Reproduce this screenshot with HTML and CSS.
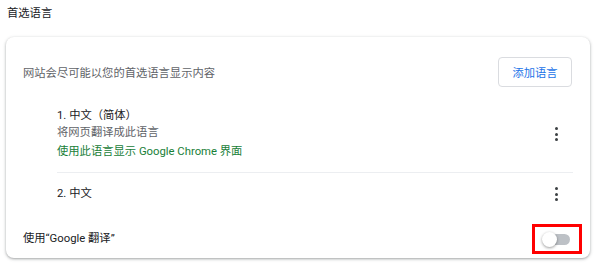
FILE: index.html
```html
<!DOCTYPE html>
<html lang="zh-CN">
<head>
<meta charset="utf-8">
<link rel="stylesheet" href="styles.css">
</head>
<body>
<div class="title">首选语言</div>
<div class="card">
  <div class="header">
    <div class="desc">网站会尽可能以您的首选语言显示内容</div>
    <button class="add-btn">添加语言</button>
  </div>
  <div class="items">
    <div class="item first">
      <div class="item-text">
        <div class="name">1. 中文（简体）</div>
        <div class="sub">将网页翻译成此语言</div>
        <div class="ui-lang">使用此语言显示 Google Chrome 界面</div>
      </div>
      <div class="kebab"><span></span><span></span><span></span></div>
    </div>
    <div class="item second">
      <div class="item-text">
        <div class="name">2. 中文</div>
      </div>
      <div class="kebab"><span></span><span></span><span></span></div>
    </div>
  </div>
  <div class="translate-row">
    <div class="label">使用“Google 翻译”</div>
    <div class="highlight">
      <div class="toggle"><div class="knob"></div></div>
    </div>
  </div>
</div>
</body>
</html>
```
FILE: styles.css
```css
* { box-sizing: border-box; }
html, body { margin: 0; padding: 0; background: #fff; }
body {
  font-family: Roboto, "Noto Sans CJK SC", sans-serif;
  font-size: 11.3px;
  color: #202124;
  width: 608px;
  height: 275px;
  overflow: hidden;
}
.title {
  padding: 6px 0 0 7px;
  line-height: 16px;
  height: 37px;
}
.card {
  margin-left: 6px;
  width: 584px;
  height: 221px;
  border-radius: 8px;
  background: #fff;
  box-shadow: 0 1px 2px rgba(60,64,67,.3), 0 1px 3px 1px rgba(60,64,67,.15);
  display: flex;
  flex-direction: column;
}
.header {
  display: flex;
  align-items: center;
  justify-content: space-between;
  padding: 20px 18px 0 17px;
}
.desc { color: #5f6368; line-height: 16px; margin-top: 4px; }
.add-btn {
  width: 74px;
  height: 30px;
  border: 1px solid #dadce0;
  border-radius: 4px;
  background: #fff;
  color: #1a73e8;
  font-family: inherit;
  font-size: 11.3px;
  padding: 0;
}
.items {
  margin: 21px 17px 0 51px;
}
.item {
  display: flex;
  align-items: center;
  justify-content: space-between;
}
.item.first { padding-bottom: 12px; border-bottom: 1px solid #eceef1; }
.item.second { padding: 13px 0; }
.item-text { line-height: 16px; }
.sub { color: #5f6368; margin-top: 1px; }
.ui-lang { color: #188038; margin-top: 3px; }
.kebab {
  width: 24px;
  margin-right: 5px;
  display: flex;
  flex-direction: column;
  align-items: center;
  gap: 2.5px;
}
.kebab span {
  width: 3px;
  height: 3px;
  border-radius: 50%;
  background: #3c4043;
}
.translate-row {
  display: flex;
  align-items: center;
  justify-content: space-between;
  padding: 9px 8px 0 17px;
}
.label { line-height: 16px; }
.highlight {
  width: 50px;
  height: 30px;
  border: 3px solid #f00;
  display: flex;
  align-items: center;
  justify-content: center;
}
.toggle {
  position: relative;
  width: 26px;
  height: 11px;
  border-radius: 6px;
  background: #bdc1c6;
}
.knob {
  position: absolute;
  left: -2px;
  top: -2px;
  width: 15px;
  height: 15px;
  border-radius: 50%;
  background: #fff;
  box-shadow: 0 1px 3px rgba(0,0,0,.4);
}
```
